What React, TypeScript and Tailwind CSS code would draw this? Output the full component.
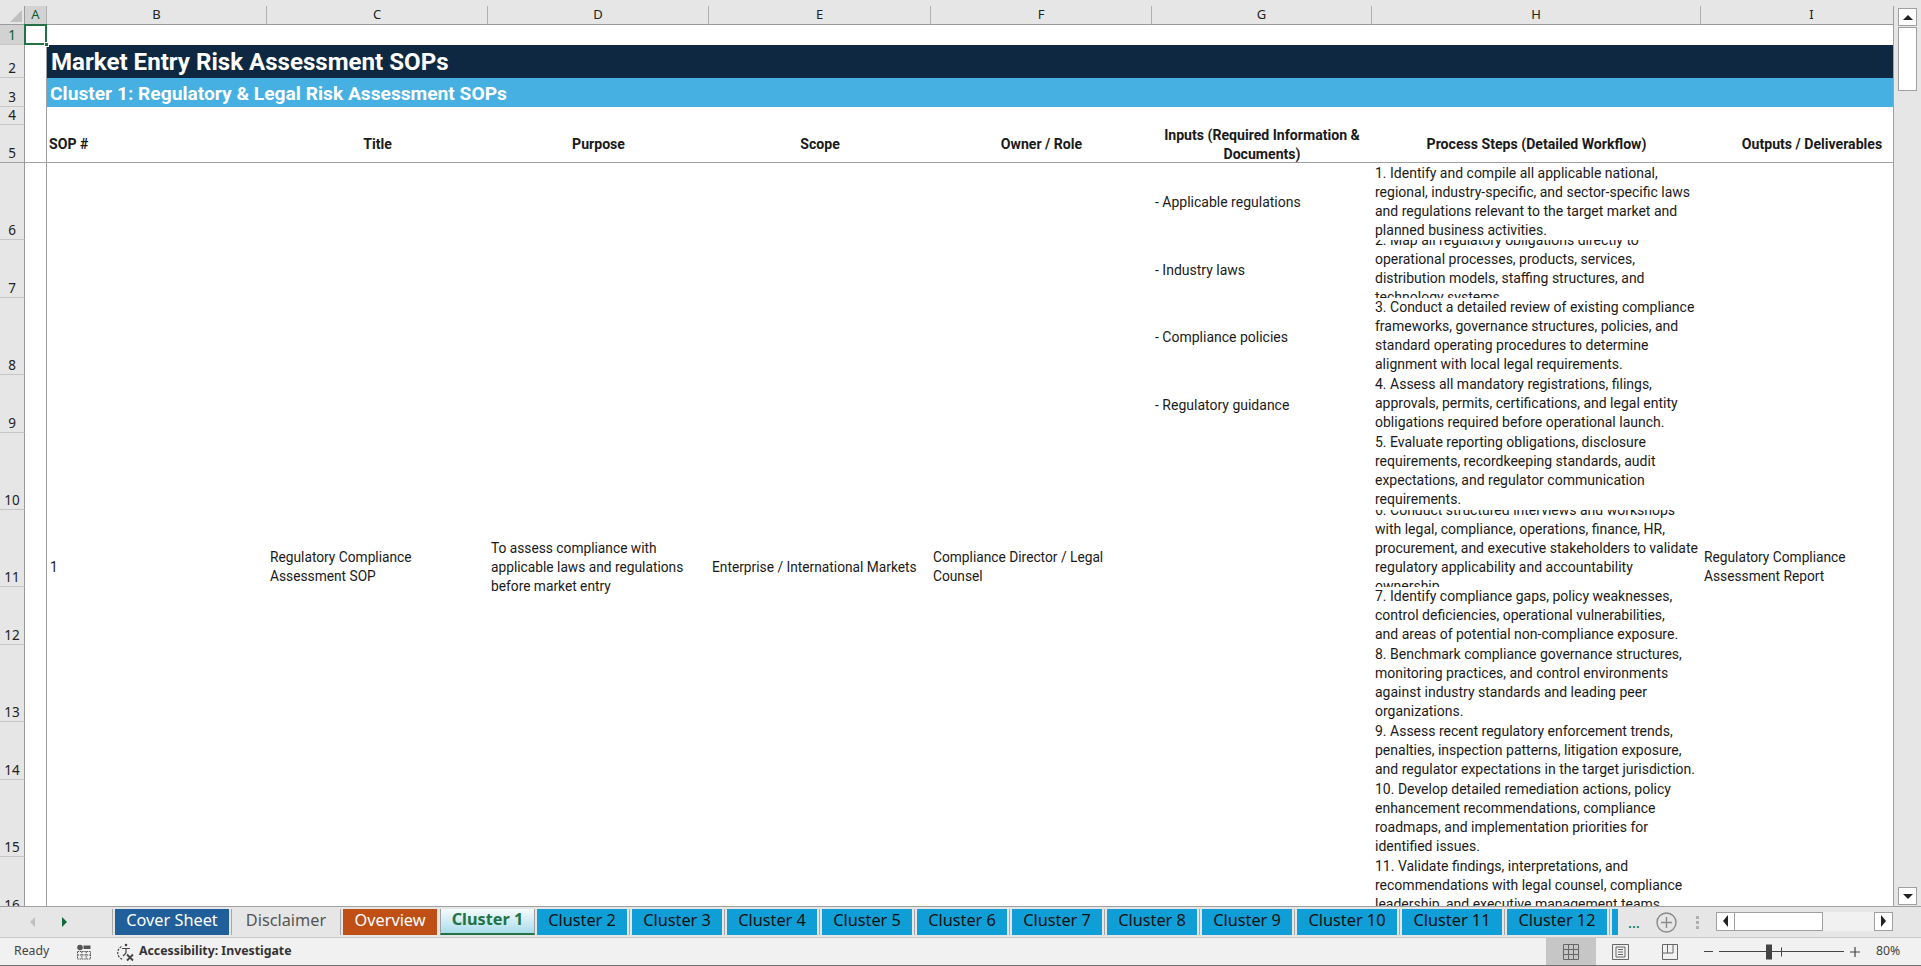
const colLetters = [
  { name: "A", active: true },
  { name: "B" },
  { name: "C" },
  { name: "D" },
  { name: "E" },
  { name: "F" },
  { name: "G" },
  { name: "H" },
  { name: "I" },
];

const headers = [
  { text: "SOP #", left: true },
  { text: "Title" },
  { text: "Purpose" },
  { text: "Scope" },
  { text: "Owner / Role" },
  { text: "Inputs (Required Information & Documents)" },
  { text: "Process Steps (Detailed Workflow)" },
  { text: "Outputs / Deliverables" },
];

const inputs = ["- Applicable regulations", "- Industry laws", "- Compliance policies", "- Regulatory guidance"];

const steps = [
  ["1. Identify and compile all applicable national,", "regional, industry-specific, and sector-specific laws", "and regulations relevant to the target market and", "planned business activities."],
  ["2. Map all regulatory obligations directly to", "operational processes, products, services,", "distribution models, staffing structures, and", "technology systems."],
  ["3. Conduct a detailed review of existing compliance", "frameworks, governance structures, policies, and", "standard operating procedures to determine", "alignment with local legal requirements."],
  ["4. Assess all mandatory registrations, filings,", "approvals, permits, certifications, and legal entity", "obligations required before operational launch."],
  ["5. Evaluate reporting obligations, disclosure", "requirements, recordkeeping standards, audit", "expectations, and regulator communication", "requirements."],
  ["6. Conduct structured interviews and workshops", "with legal, compliance, operations, finance, HR,", "procurement, and executive stakeholders to validate", "regulatory applicability and accountability", "ownership."],
  ["7. Identify compliance gaps, policy weaknesses,", "control deficiencies, operational vulnerabilities,", "and areas of potential non-compliance exposure."],
  ["8. Benchmark compliance governance structures,", "monitoring practices, and control environments", "against industry standards and leading peer", "organizations."],
  ["9. Assess recent regulatory enforcement trends,", "penalties, inspection patterns, litigation exposure,", "and regulator expectations in the target jurisdiction."],
  ["10. Develop detailed remediation actions, policy", "enhancement recommendations, compliance", "roadmaps, and implementation priorities for", "identified issues."],
  ["11. Validate findings, interpretations, and", "recommendations with legal counsel, compliance", "leadership, and executive management teams."],
];

const clusterTabs = ["Cluster 2", "Cluster 3", "Cluster 4", "Cluster 5", "Cluster 6", "Cluster 7", "Cluster 8", "Cluster 9", "Cluster 10", "Cluster 11", "Cluster 12"];

function RowHead({ n, active, dark }: { n: number; active?: boolean; dark?: boolean }) {
  return (
    <div
      className={`flex items-end justify-center border-r border-b border-r-[#9a9a9a] pb-[1px] text-[13.5px] leading-[15px] [font-family:'Noto_Sans',sans-serif] ${
        dark ? "border-b-[#a0a0a0]" : "border-b-[#c6c6c6]"
      } ${active ? "bg-[#d2d2d2] text-[#0e5c2f]" : "bg-[#e6e6e6] text-[#222]"}`}
    >
      {n}
    </div>
  );
}

function Sep() {
  return (
    <div className="flex h-full w-[5px] shrink-0 justify-center">
      <div className="h-full w-[1px] bg-[#a8a8a8]" />
    </div>
  );
}

function Tab({ label, cls, width }: { label: string; cls: string; width: string }) {
  return <div className={`flex h-full shrink-0 items-center justify-center pb-[4px] text-[16.3px] ${width} ${cls}`}>{label}</div>;
}

function StepCell({ lines, nudge }: { lines: string[]; nudge?: boolean }) {
  return (
    <div className="flex items-center overflow-hidden pl-[3px]">
      <div className={`shrink-0 ${nudge ? "-mt-[1px]" : ""}`}>
        {lines.map((l) => (
          <div key={l} className="h-[19px] whitespace-nowrap leading-[19px]">
            {l}
          </div>
        ))}
      </div>
    </div>
  );
}

export default function App() {
  return (
    <div className="flex h-[966px] w-[1921px] flex-col overflow-hidden bg-[#e6e6e6] text-[#1a1a1a] [font-family:Roboto,sans-serif]">
      <div className="h-[6px] shrink-0 bg-[#e6e6e6]" />

      <div className="flex h-[900px] shrink-0">
        {/* sheet */}
        <div className="relative grid h-[900px] w-[1894px] shrink-0 grid-cols-[25px_22px_220px_221px_221px_222px_221px_220px_329px_222px] grid-rows-[19px_20px_33px_29px_18px_38px_77px_58px_77px_58px_77px_77px_58px_77px_58px_77px_58px_56px] overflow-hidden border-r border-r-[#a0a0a0] bg-white text-[13.75px]">
          {/* column letters */}
          <div className="flex items-end justify-end border-r border-b border-r-[#9a9a9a] border-b-[#9a9a9a] bg-[#e6e6e6]">
            <div className="mr-[2px] mb-[2px] h-0 w-0 border-b-[12px] border-l-[12px] border-b-[#c0c0c0] border-l-transparent" />
          </div>
          {colLetters.map((c) => (
            <div
              key={c.name}
              className={`flex items-center justify-center border-r border-b border-r-[#b0b0b0] border-b-[#9a9a9a] text-[13px] [font-family:'Noto_Sans',sans-serif] ${
                c.active ? "bg-[#d2d2d2] text-[#0e5c2f]" : "bg-[#e6e6e6] text-[#222]"
              }`}
            >
              {c.name}
            </div>
          ))}

          {/* row 1 */}
          <RowHead n={1} active />
          <div className="relative border-r border-r-[#a0a0a0]">
            <div className="absolute -top-[1px] -right-[1px] bottom-0 -left-[1px] z-10 border-2 border-[#217346]" />
            <div className="absolute -right-[3px] -bottom-[2px] z-20 h-[5px] w-[5px] border border-white bg-[#217346]" />
          </div>
          <div className="col-span-8" />

          {/* row 2 */}
          <RowHead n={2} />
          <div className="border-r border-r-[#a0a0a0]" />
          <div className="col-span-8 flex items-center bg-[#0e2841] pt-[2px] pl-[4px] text-[24.1px] font-bold whitespace-nowrap text-white">
            Market Entry Risk Assessment SOPs
          </div>

          {/* row 3 */}
          <RowHead n={3} />
          <div className="border-r border-r-[#a0a0a0]" />
          <div className="col-span-8 flex items-center bg-[#45b0e1] pt-[3px] pl-[3px] text-[19.2px] font-bold whitespace-nowrap text-white">
            Cluster 1: Regulatory &amp; Legal Risk Assessment SOPs
          </div>

          {/* row 4 */}
          <RowHead n={4} />
          <div className="border-r border-r-[#a0a0a0]" />
          <div className="col-span-8" />

          {/* row 5 */}
          <RowHead n={5} dark />
          <div className="border-r border-b border-r-[#a0a0a0] border-b-[#a0a0a0]" />
          {headers.map((h) => (
            <div
              key={h.text}
              className={`flex items-center border-b border-b-[#a0a0a0] px-[2px] pt-[2px] text-[14.1px] leading-[19px] font-bold ${
                h.left ? "justify-start" : "justify-center text-center"
              }`}
            >
              {h.text}
            </div>
          ))}

          {/* merged cells over rows 6 to 17 */}
          <div className="col-start-2 row-span-12 row-start-7 border-r border-r-[#a0a0a0]" />
          <div className="col-start-3 row-span-12 row-start-7 flex items-center pl-[3px]">1</div>
          <div className="col-start-4 row-span-12 row-start-7 flex items-center pl-[3px] leading-[19px]">
            Regulatory Compliance
            <br />
            Assessment SOP
          </div>
          <div className="col-start-5 row-span-12 row-start-7 flex items-center pl-[3px] leading-[19px]">
            To assess compliance with
            <br />
            applicable laws and regulations
            <br />
            before market entry
          </div>
          <div className="col-start-6 row-span-12 row-start-7 flex items-center pl-[3px] whitespace-nowrap">
            Enterprise / International Markets
          </div>
          <div className="col-start-7 row-span-12 row-start-7 flex items-center pl-[2px] leading-[19px]">
            Compliance Director / Legal
            <br />
            Counsel
          </div>

          {/* inputs */}
          {inputs.map((t, i) => (
            <div key={t} className="col-start-8 flex items-center pt-[2px] pl-[3px] text-[14px]" style={{ gridRowStart: i + 7 }}>
              {t}
            </div>
          ))}

          {/* process steps */}
          {steps.map((lines, i) => (
            <div key={lines[0]} className="col-start-9 grid overflow-hidden text-[14px]" style={{ gridRowStart: i + 7 }}>
              <StepCell lines={lines} nudge={i > 1} />
            </div>
          ))}

          <div className="col-start-10 row-span-12 row-start-7 flex items-center pl-[3px] leading-[19px]">
            Regulatory Compliance
            <br />
            Assessment Report
          </div>

          {/* row numbers 6-17 */}
          {[6, 7, 8, 9, 10, 11, 12, 13, 14, 15, 16, 17].map((n) => (
            <div key={n} className="col-start-1 grid" style={{ gridRowStart: n + 1 }}>
              <RowHead n={n} />
            </div>
          ))}
        </div>

        {/* vertical scrollbar */}
        <div className="flex flex-1 flex-col items-center bg-[#e6e6e6] px-[3px] pt-[2px] pb-[1px]">
          <div className="flex h-[18px] w-[19px] items-center justify-center border border-[#a0a0a0] bg-white">
            <div className="h-0 w-0 border-r-[5px] border-b-[5px] border-l-[5px] border-r-transparent border-b-[#222] border-l-transparent" />
          </div>
          <div className="mt-[1px] h-[64px] w-[19px] border border-[#a0a0a0] bg-white" />
          <div className="w-full flex-1" />
          <div className="flex h-[18px] w-[19px] items-center justify-center border border-[#a0a0a0] bg-white">
            <div className="h-0 w-0 border-t-[5px] border-r-[5px] border-l-[5px] border-t-[#222] border-r-transparent border-l-transparent" />
          </div>
        </div>
      </div>

      {/* sheet tabs */}
      <div className="flex h-[32px] shrink-0 items-stretch border-t border-b border-t-[#a0a0a0] border-b-[#c8c8c8] bg-[#e6e6e6] pb-[2px] [font-family:'Noto_Sans',sans-serif]">
        <div className="flex w-[110px] shrink-0 items-center pt-[2px]">
          <div className="ml-[30px] h-0 w-0 border-t-[5px] border-r-[5px] border-b-[5px] border-t-transparent border-r-[#c0c0c0] border-b-transparent" />
          <div className="ml-[27px] h-0 w-0 border-t-[5px] border-b-[5px] border-l-[5px] border-t-transparent border-b-transparent border-l-[#0e6b38]" />
        </div>
        <div className="flex h-[26px] w-[1508px] shrink-0 self-end overflow-hidden">
          <Sep />
          <Tab label="Cover Sheet" width="w-[114px]" cls="bg-[#215f9a] text-white" />
          <Sep />
          <Tab label="Disclaimer" width="w-[104px]" cls="text-[#555]" />
          <Sep />
          <Tab label="Overview" width="w-[94px]" cls="bg-[#c04f15] text-white" />
          <div className="w-[3px] shrink-0" />
          <div className="relative -mt-[3px] flex h-[29px] w-[95px] shrink-0 items-center justify-center border-x border-x-[#a0a0a0] border-b-2 border-b-[#217346] bg-gradient-to-b from-white to-[#a9dcec] pb-[1px] text-[16.3px] font-bold text-[#217346]">
            Cluster 1
          </div>
          <div className="w-[2px] shrink-0" />
          {clusterTabs.map((t, i) => (
            <div key={t} className="flex h-full shrink-0">
              {i > 0 && <Sep />}
              <Tab label={t} width={i >= 8 ? "w-[100px]" : "w-[90px]"} cls="bg-[#0f9ed5] text-[#111]" />
            </div>
          ))}
          <Sep />
          <div className="w-[6px] shrink-0 bg-[#0f9ed5]" />
        </div>
        <div className="flex w-[32px] shrink-0 items-center justify-center pt-[2px] text-[15px] text-[#0e6b38]">…</div>
        <div className="flex w-[32px] shrink-0 items-center justify-center pt-[2px]">
          <svg width="21" height="21" viewBox="0 0 21 21" fill="none" stroke="#8a8a8a" strokeWidth="1.4">
            <circle cx="10.5" cy="10.5" r="9.5" />
            <path d="M10.5 5v11M5 10.5h11" />
          </svg>
        </div>
        <div className="flex w-[30px] shrink-0 flex-col items-center justify-center gap-[2px] pt-[2px]">
          <div className="h-[3px] w-[3px] bg-[#b0b0b0]" />
          <div className="h-[3px] w-[3px] bg-[#b0b0b0]" />
          <div className="h-[3px] w-[3px] bg-[#b0b0b0]" />
        </div>
        <div className="ml-[4px] flex h-[19px] w-[177px] shrink-0 self-center bg-[#f1f1f1]">
          <div className="flex w-[19px] items-center justify-center border border-[#a0a0a0] bg-white">
            <div className="h-0 w-0 border-t-[6px] border-r-[5px] border-b-[6px] border-t-transparent border-r-[#222] border-b-transparent" />
          </div>
          <div className="w-[88px] border border-l-0 border-[#a0a0a0] bg-white" />
          <div className="flex-1" />
          <div className="flex w-[19px] items-center justify-center border border-[#a0a0a0] bg-white">
            <div className="h-0 w-0 border-t-[6px] border-b-[6px] border-l-[5px] border-t-transparent border-b-transparent border-l-[#222]" />
          </div>
        </div>
      </div>

      {/* status bar */}
      <div className="flex flex-1 items-stretch border-b border-b-[#707070] bg-[#f1f1f1] text-[12.3px] text-[#444] [font-family:'Noto_Sans',sans-serif]">
        <div className="ml-[14px] flex w-[62px] items-center">Ready</div>
        <div className="flex w-[39px] items-center">
          <svg width="16" height="16" viewBox="0 0 16 16" fill="none" stroke="#555">
            <circle cx="4" cy="3.5" r="2.8" fill="#555" stroke="none" />
            <path d="M7.5 1.5h7v3.5h-7z" fill="#555" stroke="none" />
            <path d="M1.5 7.5h13v7.5h-13zM1.5 11h13M5.8 7.5v7.5M10.2 7.5v7.5" strokeDasharray="1.5 0.8" />
          </svg>
        </div>
        <div className="flex w-[24px] items-center">
          <svg width="20" height="20" viewBox="0 0 20 20" fill="none" stroke="#444" strokeWidth="1.2">
            <path d="M6.5 4.5A7 7 0 0 0 8 17.5" strokeDasharray="2.2 1.2" />
            <circle cx="11" cy="3" r="1.3" fill="#444" stroke="none" />
            <path d="M7 6.5h8M11 6v5M11 11l-3 3" />
            <path d="M12 12.5l6 6M18 12.5l-6 6" strokeWidth="1.8" />
          </svg>
        </div>
        <div className="flex items-center font-bold whitespace-nowrap text-[#333]">Accessibility: Investigate</div>

        <div className="ml-auto flex w-[50px] items-center justify-center bg-[#c6c6c6]">
          <svg width="16" height="16" viewBox="0 0 16 16" fill="none" stroke="#666">
            <path d="M.5.5h15v15H.5zM.5 5.5h15M.5 10.5h15M5.5.5v15M10.5.5v15" />
          </svg>
        </div>
        <div className="flex w-[49px] items-center justify-center">
          <svg width="17" height="16" viewBox="0 0 17 16" fill="none" stroke="#666">
            <path d="M.5.5h16v15H.5zM4 3h9v10H4zM6 5.5h5M6 8h5M6 10.5h5" />
          </svg>
        </div>
        <div className="flex w-[50px] items-center justify-center">
          <svg width="16" height="16" viewBox="0 0 16 16" fill="none" stroke="#666">
            <path d="M.5.5h15v15H.5zM.5 9h10.5M5.5.5V9M11 .5V9" />
          </svg>
        </div>
        <div className="flex w-[18px] items-center justify-end">
          <div className="h-[1.5px] w-[9px] bg-[#444]" />
        </div>
        <div className="relative ml-[6px] flex w-[125px] items-center">
          <div className="h-[1.5px] w-full bg-[#444]" />
          <div className="absolute top-1/2 left-[47px] h-[15px] w-[6px] -translate-y-1/2 bg-[#444]" />
          <div className="absolute top-1/2 left-[62px] h-[9px] w-[1px] -translate-y-1/2 bg-[#444]" />
        </div>
        <div className="ml-[6px] flex w-[10px] items-center justify-center">
          <svg width="10" height="10" viewBox="0 0 10 10" stroke="#444" strokeWidth="1.2">
            <path d="M5 0v10M0 5h10" />
          </svg>
        </div>
        <div className="flex w-[61px] items-center justify-start pl-[16px]">80%</div>
      </div>
    </div>
  );
}
